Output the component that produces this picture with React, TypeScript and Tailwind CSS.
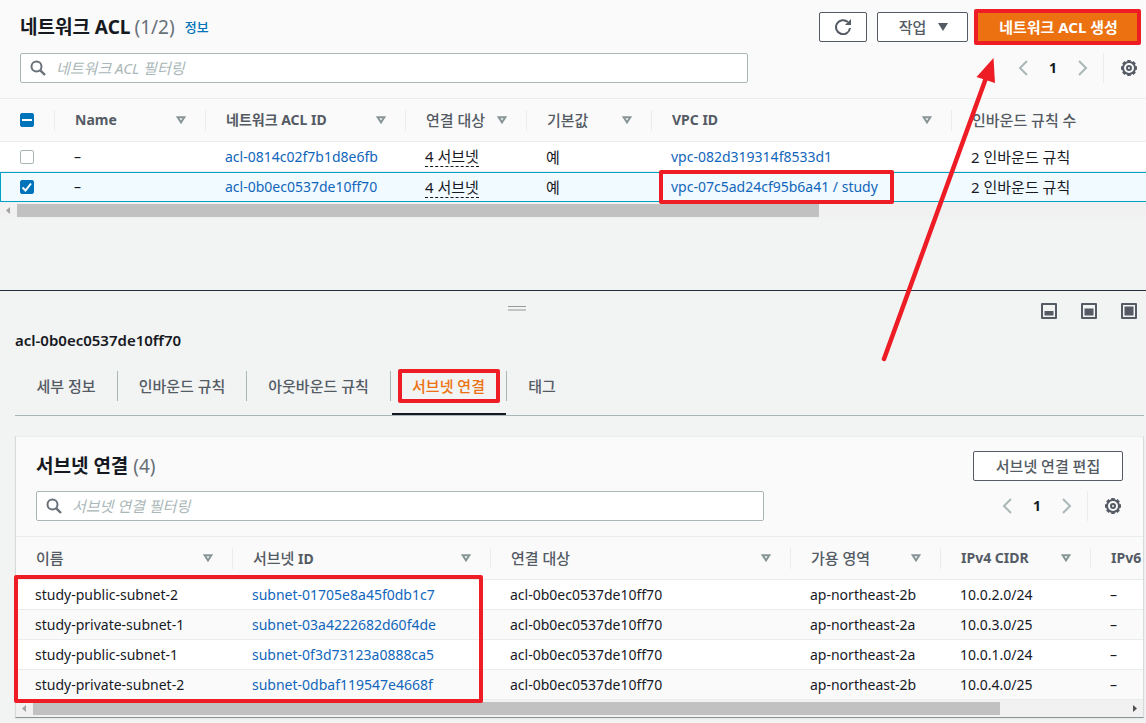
import { useState } from "react";
import type { ReactNode } from "react";

const acls = [
  { id: "acl-0814c02f7b1d8e6fb", vpc: "vpc-082d319314f8533d1" },
  { id: "acl-0b0ec0537de10ff70", vpc: "vpc-07c5ad24cf95b6a41 / study" },
];

const subnets = [
  { name: "study-public-subnet-2", id: "subnet-01705e8a45f0db1c7", az: "ap-northeast-2b", cidr: "10.0.2.0/24" },
  { name: "study-private-subnet-1", id: "subnet-03a4222682d60f4de", az: "ap-northeast-2a", cidr: "10.0.3.0/25" },
  { name: "study-public-subnet-1", id: "subnet-0f3d73123a0888ca5", az: "ap-northeast-2a", cidr: "10.0.1.0/24" },
  { name: "study-private-subnet-2", id: "subnet-0dbaf119547e4668f", az: "ap-northeast-2b", cidr: "10.0.4.0/25" },
];

const tabs = [
  { label: "세부 정보", width: "w-[103px]" },
  { label: "인바운드 규칙", width: "w-[129px]" },
  { label: "아웃바운드 규칙", width: "w-[144px]" },
  { label: "서브넷 연결", width: "w-[116px]" },
  { label: "태그", width: "w-[70px]" },
];

// Icons
function SearchIcon() {
  return (
    <svg className="h-4 w-4 shrink-0" viewBox="0 0 16 16" fill="none" stroke="#687078" strokeWidth="2">
      <circle cx="6.5" cy="6.5" r="5" />
      <path d="M10.3 10.3 15 15" strokeWidth="2.4" />
    </svg>
  );
}

function RefreshIcon() {
  return (
    <svg className="h-4 w-4" viewBox="0 0 16 16" fill="none" stroke="#545b64" strokeWidth="2">
      <path d="M15 9A7 7 0 1 1 12.8 3" />
      <path d="M16 0v6h-6l2-2 2-2z" fill="#545b64" stroke="none" />
    </svg>
  );
}

function GearIcon() {
  return (
    <svg className="h-4 w-4" viewBox="0 0 16 16" fill="none" stroke="#545b64">
      <circle cx="8" cy="8" r="6" strokeWidth="2" />
      <path
        d="M8 0v2M8 14v2M0 8h2M14 8h2M2.3 2.3l1.5 1.5M12.2 12.2l1.5 1.5M2.3 13.7l1.5-1.5M12.2 3.8l1.5-1.5"
        strokeWidth="3.4"
      />
      <circle cx="8" cy="8" r="2" strokeWidth="2" />
    </svg>
  );
}

function Chevron({ d }: { d: string }) {
  return (
    <svg className="h-4 w-[10px]" viewBox="0 0 10 16" fill="none" stroke="#aab7b8" strokeWidth="2">
      <path d={d} />
    </svg>
  );
}

function PanelIcon({ y }: { y: number }) {
  return (
    <svg className="h-4 w-4" viewBox="0 0 16 16" fill="none">
      <rect x="1" y="1" width="14" height="14" stroke="#545b64" strokeWidth="2" strokeLinejoin="round" />
      <rect x="3.5" y={y} width="9" height={12.5 - y} fill="#545b64" />
    </svg>
  );
}

function Checkbox({ checked, mixed, label, onChange }: any) {
  const filled = checked || mixed;
  return (
    <span className="relative block h-[14px] w-[14px]">
      <input
        type="checkbox"
        aria-label={label}
        checked={filled}
        onChange={onChange}
        className={`block h-[14px] w-[14px] appearance-none rounded-xs border ${
          filled ? "border-[#0073bb] bg-[#0073bb]" : "border-[#aab7b8] bg-white"
        }`}
      />
      {filled && (
        <svg className="pointer-events-none absolute inset-0" viewBox="0 0 14 14" fill="none" stroke="#fff" strokeWidth="2">
          <path d={mixed ? "M2 7h10" : "M2.5 7.5 5.5 10.5 11 3.5"} />
        </svg>
      )}
    </span>
  );
}

function SearchBox({ id, label }: { id: string; label: string }) {
  return (
    <label
      htmlFor={id}
      className="flex h-[30px] w-[728px] items-center gap-[10px] rounded-xs border border-[#aab7b8] bg-white px-[9px]"
    >
      <SearchIcon />
      <input
        id={id}
        type="search"
        aria-label={label}
        placeholder={label}
        className="min-w-0 flex-1 bg-transparent text-[15px] outline-none placeholder:text-[#aab7b8] placeholder:italic"
      />
    </label>
  );
}

function Pagination() {
  return (
    <div className="flex h-[30px] items-center">
      <button aria-label="이전 페이지"><Chevron d="M9 1 2 8l7 7" /></button>
      <button className="w-[50px] font-bold">1</button>
      <button aria-label="다음 페이지"><Chevron d="M1 1l7 7-7 7" /></button>
      <span className="mr-[17px] ml-[15px] h-[30px] w-px bg-[#eaeded]" />
      <button aria-label="설정"><GearIcon /></button>
    </div>
  );
}

function Th({ children, sort = true, last = false }: { children?: ReactNode; sort?: boolean; last?: boolean }) {
  return (
    <th className="h-11 border-y border-[#eaeded] bg-[#fafafa] p-0 text-left font-bold text-[#545b64]">
      <div className={`flex h-[21px] items-center justify-between pr-[19px] pl-5 ${last ? "" : "border-r border-[#eaeded]"}`}>
        <span className="whitespace-nowrap">{children}</span>
        {sort && (
          <button aria-label="정렬">
            <svg className="h-2 w-[10px]" viewBox="0 0 10 8" fill="none" stroke="#879596" strokeWidth="2">
              <path d="M1.6 1.2h6.8L5 6.4z" />
            </svg>
          </button>
        )}
      </div>
    </th>
  );
}

// Horizontal scrollbar below a table
function ScrollBar({ thumb, end = true }: { thumb: string; end?: boolean }) {
  return (
    <div className="flex h-[17px] items-center bg-[#f1f1f1]">
      <svg className="h-[13px] w-[17px] shrink-0" viewBox="0 0 17 13"><path d="M10 3v7L6 6.5z" fill="#a3a3a3" /></svg>
      <div className="h-full flex-1 py-[2px]">
        <div className={`h-[13px] bg-[#c1c1c1] ${thumb}`} />
      </div>
      {end && (
        <svg className="h-[13px] w-[17px] shrink-0" viewBox="0 0 17 13"><path d="M7 3v7l4-3.5z" fill="#505050" /></svg>
      )}
    </div>
  );
}

export default function App() {
  const [selected, setSelected] = useState(1);
  const [tab, setTab] = useState(3);

  return (
    <div className="relative flex min-h-screen flex-col overflow-hidden bg-[#f2f3f3] font-['Noto_Sans','Noto_Sans_CJK_KR',sans-serif] text-sm leading-5 text-[#16191f]">
      {/* Network ACL list */}
      <section className="flex-1">
        <div className="bg-[#fafafa] pt-3 pr-[7px] pb-[15px] pl-5">
          <div className="flex h-[30px] items-center justify-between">
            <h1 className="flex items-center text-[19px] font-bold">
              네트워크 ACL
              <span className="ml-1 font-normal text-[#687078]">(1/2)</span>
              <a href="#info" className="ml-[10px] text-[13px] font-medium text-[#0073bb]">정보</a>
            </h1>
            <div className="flex gap-[10px]">
              <button aria-label="새로 고침" className="flex h-[30px] w-12 items-center justify-center rounded-xs border border-[#545b64] bg-white">
                <RefreshIcon />
              </button>
              <button className="flex h-[30px] w-[91px] items-center justify-center gap-3 rounded-xs border border-[#545b64] bg-white pl-[2px] text-[15px] font-medium text-[#545b64]">
                작업
                <svg className="h-2 w-[10px]" viewBox="0 0 10 8"><path d="M0 0h10L5 8z" fill="#545b64" /></svg>
              </button>
              <div className="relative">
                <button className="h-[30px] w-[161px] rounded-xs bg-[#ec7211] text-[15px] font-bold text-white">네트워크 ACL 생성</button>
                <span className="pointer-events-none absolute -top-[3px] -right-[2px] -bottom-[3px] -left-1 rounded-xs border-4 border-[#ee1c25]" />
              </div>
            </div>
          </div>
          <div className="mt-[11px] flex items-center justify-between pr-[2px]">
            <SearchBox id="acl-filter" label="네트워크 ACL 필터링" />
            <Pagination />
          </div>
        </div>

        {/* extra bottom room so the outline of the last row is not cut */}
        <div className="relative -mb-[5px] overflow-hidden pb-[5px]">
          <table className="w-[1500px] table-fixed border-separate border-spacing-0 bg-white">
            <colgroup>
              <col className="w-[55px]" />
              <col className="w-[151px]" />
              <col className="w-[200px]" />
              <col className="w-[121px]" />
              <col className="w-[125px]" />
              <col className="w-[300px]" />
              <col />
            </colgroup>
            <thead>
              <tr>
                <Th sort={false}><Checkbox mixed label="모두 선택" onChange={() => setSelected(1)} /></Th>
                <Th>Name</Th>
                <Th>네트워크 ACL ID</Th>
                <Th><span className="text-[15px] font-medium">연결 대상</span></Th>
                <Th><span className="text-[15px] font-medium">기본값</span></Th>
                <Th>VPC ID</Th>
                <Th last sort={false}><span className="text-[15px] font-medium">인바운드 규칙 수</span></Th>
              </tr>
            </thead>
            <tbody>
              {acls.map((acl, i) => {
                const on = i === selected;
                const cell = `h-[30px] border-b py-0 pr-0 pl-[19px] ${
                  on ? "border-t border-[#00a1c9] bg-[#f1faff]" : "border-[#eaeded]"
                }`;
                return (
                  <tr key={acl.id}>
                    <td className={`${cell} ${on ? "border-l" : "border-l border-l-white"}`}>
                      <Checkbox checked={on} label={acl.id} onChange={() => setSelected(i)} />
                    </td>
                    <td className={cell}>–</td>
                    <td className={cell}><a href={`#${acl.id}`} className="text-[#1166bb]">{acl.id}</a></td>
                    <td className={cell}>
                      <span className="inline-block border-b border-dashed border-[#16191f] text-[15px]">4 서브넷</span>
                    </td>
                    <td className={`${cell} text-[15px]`}>예</td>
                    <td className={cell}>
                      <span className="relative inline-block">
                        <a href={`#${acl.vpc}`} className="text-[#1166bb]">{acl.vpc}</a>
                        {i === 1 && (
                          <span className="pointer-events-none absolute -top-[7px] -right-4 -bottom-[7px] -left-3 rounded-xs border-4 border-[#ee1c25]" />
                        )}
                      </span>
                    </td>
                    <td className={`${cell} text-[15px]`}>2 인바운드 규칙</td>
                  </tr>
                );
              })}
            </tbody>
          </table>
        </div>
        <ScrollBar thumb="w-[71%]" end={false} />
      </section>

      {/* Split panel */}
      <section className="border-t border-[#232f3e] pb-[5px]">
        <div className="grid grid-cols-[1fr_auto_1fr] pt-3 pr-[9px]">
          <span />
          <span className="mt-[3px] mr-[104px] block h-[5px] w-[18px] border-t border-b-2 border-t-[#999] border-b-[#c4c4c4]" />
          <div className="flex justify-end gap-6">
            <button aria-label="작게"><PanelIcon y={8} /></button>
            <button aria-label="중간"><PanelIcon y={5.5} /></button>
            <button aria-label="크게"><PanelIcon y={3.5} /></button>
          </div>
        </div>
        <h2 className="mt-[11px] ml-[15px] text-[15px] font-semibold">acl-0b0ec0537de10ff70</h2>

        <div role="tablist" className="mt-[11px] mr-[2px] ml-[15px] flex h-[55px] border-b border-[#aab7b8]">
          {tabs.map((t, i) => (
            <div key={t.label} className={`relative h-full pt-[10px] ${t.width}`}>
              <button
                role="tab"
                aria-selected={i === tab}
                onClick={() => setTab(i)}
                className={`block h-[30px] w-full text-[15px] font-medium ${i < 4 ? "border-r border-[#aab7b8]" : ""} ${
                  i === tab ? "text-[#ec7211]" : "text-[#545b64]"
                }`}
              >
                {t.label}
              </button>
              {i === tab && <span className="absolute right-px bottom-0 left-px h-[2px] bg-[#16191f]" />}
              {i === 3 && (
                <span className="pointer-events-none absolute inset-x-[7px] top-2 h-[34px] rounded-xs border-4 border-[#ee1c25]" />
              )}
            </div>
          ))}
        </div>

        {/* Subnet associations */}
        <div className="mt-5 mr-[2px] ml-[15px] border border-x-[#d5dbdb] border-t-[#eaeded] border-b-[#879596] bg-[#fafafa] shadow-xs">
          <div className="pt-[14px] pr-5 pb-[15px] pl-5">
            <div className="flex h-[30px] items-center justify-between">
              <h3 className="text-[19px] font-bold">
                서브넷 연결 <span className="font-normal text-[#687078]">(4)</span>
              </h3>
              <button className="h-[30px] w-[150px] rounded-xs border border-[#545b64] bg-white text-[15px] font-medium text-[#545b64]">
                서브넷 연결 편집
              </button>
            </div>
            <div className="mt-[10px] flex items-center justify-between pr-[2px]">
              <SearchBox id="subnet-filter" label="서브넷 연결 필터링" />
              <Pagination />
            </div>
          </div>

          <div className="relative">
            <div className="overflow-hidden">
              <table className="w-[1250px] table-fixed border-separate border-spacing-0">
                <colgroup>
                  <col className="w-[217px]" />
                  <col className="w-[258px]" />
                  <col className="w-[300px]" />
                  <col className="w-[150px]" />
                  <col className="w-[150px]" />
                  <col />
                </colgroup>
                <thead>
                  <tr>
                    <Th><span className="text-[15px] font-medium">이름</span></Th>
                    <Th><span className="text-[15px] font-medium">서브넷</span> ID</Th>
                    <Th><span className="text-[15px] font-medium">연결 대상</span></Th>
                    <Th><span className="text-[15px] font-medium">가용 영역</span></Th>
                    <Th>IPv4 CIDR</Th>
                    <Th last sort={false}>IPv6</Th>
                  </tr>
                </thead>
                <tbody>
                  {subnets.map((s) => (
                    <tr key={s.id} className="odd:bg-white even:bg-[#fafafa] [&>td]:h-[30px] [&>td]:border-b [&>td]:border-[#eaeded] [&>td]:py-0 [&>td]:pr-0 [&>td]:pl-[19px]">
                      <td>{s.name}</td>
                      <td><a href={`#${s.id}`} className="text-[#1166bb]">{s.id}</a></td>
                      <td>acl-0b0ec0537de10ff70</td>
                      <td>{s.az}</td>
                      <td>{s.cidr}</td>
                      <td>–</td>
                    </tr>
                  ))}
                </tbody>
              </table>
            </div>
            <ScrollBar thumb="w-[88.5%]" />
            <span className="pointer-events-none absolute top-[39px] -left-[2px] h-[128px] w-[469px] rounded-xs border-4 border-[#ee1c25]" />
          </div>
        </div>
      </section>

      {/* Arrow to the create button */}
      <svg className="pointer-events-none absolute top-[50px] right-[136px] h-[320px] w-[140px]" viewBox="870 50 140 320">
        <path d="M884 359 986 78" stroke="#ee1c25" strokeWidth="4.5" strokeLinecap="round" />
        <path d="M993.5 58 976.5 77 995 83z" fill="#ee1c25" />
      </svg>
    </div>
  );
}
